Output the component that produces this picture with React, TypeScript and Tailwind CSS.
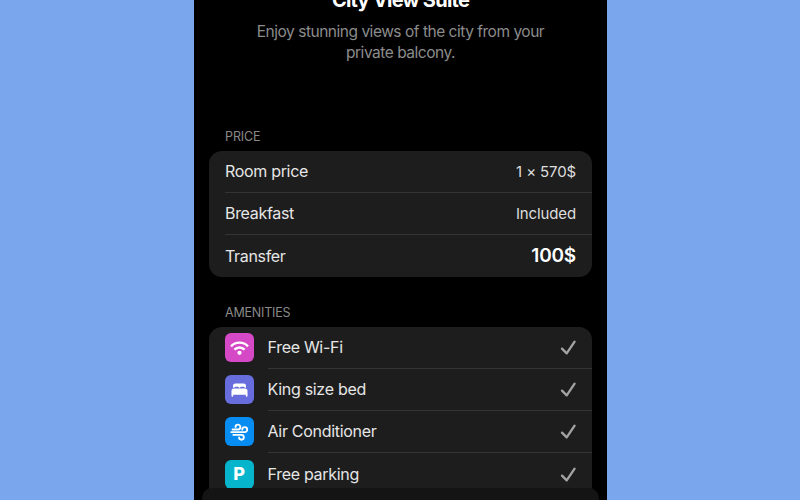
import type { ReactNode } from 'react';

const WifiIcon = () => (
  <svg width="30" height="30" viewBox="0 0 30 30" fill="none" stroke="#fff" strokeWidth="2.4">
    <path d="M6.2 13.3C11 8.2 19 8.2 23.8 13.3" />
    <path d="M9.7 16.7C12.7 13.7 17.3 13.7 20.3 16.7" />
    <circle cx="15" cy="20" r="2.2" fill="#fff" stroke="none" />
  </svg>
);

const BedIcon = () => (
  <svg width="30" height="30" viewBox="0 0 30 30" fill="#fff">
    <path d="M8.3 12.6V10.6Q8.3 8.2 10.7 8.2H19.3Q21.7 8.2 21.7 10.6V12.6H20.5Q20.2 11.6 19 11.6H16.8Q15.8 11.6 15.4 12.6H14.6Q14.2 11.6 13.2 11.6H11Q9.8 11.6 9.5 12.6Z" />
    <path d="M9.3 13.4H20.7Q23.3 13.4 23.3 16V21Q23.3 21.9 22.4 21.9Q21.5 21.9 21.5 21V19.8H8.5V21Q8.5 21.9 7.6 21.9Q6.7 21.9 6.7 21V16Q6.7 13.4 9.3 13.4Z" />
  </svg>
);

const WindIcon = () => (
  <svg width="30" height="30" viewBox="0 0 30 30" fill="none" stroke="#fff" strokeWidth="1.9" strokeLinecap="round">
    <path d="M7.8 12.4H13.4A2.5 2.5 0 1 0 10.9 9.9" />
    <path d="M6.5 15.2H20.4A2.6 2.6 0 1 0 17.8 12.6" />
    <path d="M8.6 18H17A2.5 2.5 0 1 1 14.5 20.5" />
  </svg>
);

const ParkingIcon = () => (
  <span className="text-[18px] leading-none font-extrabold text-white">P</span>
);

const CheckIcon = () => (
  <svg className="mr-[15px]" width="17" height="18" viewBox="0 0 17 18" fill="none" stroke="#a3a3a3" strokeWidth="2.3" strokeLinecap="round" strokeLinejoin="round">
    <path d="M2 10.6L6.7 15.4L14.6 3.6" />
  </svg>
);

const prices = [
  { label: 'Room price', value: '1 × 570$', style: 'pt-[1.5px] text-[15px] tracking-[-0.13px] text-[#dedede]' },
  { label: 'Breakfast', value: 'Included', style: 'pt-[1.5px] text-[15px] tracking-[-0.13px] text-[#dedede]' },
  { label: 'Transfer', value: '100$', style: 'pt-px text-[19px] font-semibold tracking-[-0.2px] text-white' },
];

const amenities: { label: string; color: string; icon: ReactNode }[] = [
  { label: 'Free Wi-Fi', color: 'bg-[#d549c6]', icon: <WifiIcon /> },
  { label: 'King size bed', color: 'bg-[#686ddd]', icon: <BedIcon /> },
  { label: 'Air Conditioner', color: 'bg-[#078cf2]', icon: <WindIcon /> },
  { label: 'Free parking', color: 'bg-[#06b4cb]', icon: <ParkingIcon /> },
];

export default function App() {
  return (
    <div className="flex h-[500px] w-[800px] justify-center overflow-hidden bg-[#79a6ed] pl-px font-['Inter',sans-serif]">
      <main className="relative h-[500px] w-[413px] overflow-hidden bg-black px-[15px] text-[#e6e6e6]">
        <h1 className="-mt-[12px] h-6 text-center text-[20px] leading-6 font-bold tracking-[-0.75px] text-white">City View Suite</h1>
        <p className="mt-[9px] text-center text-[15.5px] leading-[21px] tracking-[-0.48px] text-[#8c8c8c]">
          Enjoy stunning views of the city from your
          <br />
          private balcony.
        </p>
        <h2 className="mt-[64px] h-5 pl-4 text-[12.5px] leading-5 tracking-[-0.1px] text-[#8a8a8a]">PRICE</h2>
        <section className="mt-[3.5px] h-[126.5px] rounded-[13px] bg-[#1d1d1d] pl-4">
          {prices.map(({ label, value, style }) => (
            <div key={label} className="flex h-[42.2px] items-center justify-between border-b border-[#343434] pr-4 last:border-0">
              <span className="text-[16px] tracking-[-0.32px]">{label}</span>
              <span className={style}>{value}</span>
            </div>
          ))}
        </section>
        <h2 className="mt-[26px] h-5 pl-4 text-[12.5px] leading-5 tracking-[-0.2px] text-[#8a8a8a]">AMENITIES</h2>
        <section className="mt-[3.5px] h-[190px] rounded-t-[13px] bg-[#1d1d1d] pl-[15.5px]">
          {amenities.map(({ label, color, icon }) => (
            <div key={label} className="flex h-[42.2px] items-center">
              <span className={`flex h-[29px] w-[29px] shrink-0 items-center justify-center rounded-md ${color}`}>{icon}</span>
              <div className="ml-[14px] flex h-full flex-1 items-center justify-between border-b border-[#343434]">
                <span className="text-[16px] tracking-[-0.3px]">{label}</span>
                <CheckIcon />
              </div>
            </div>
          ))}
        </section>
        <div className="absolute bottom-0 left-[8px] h-[12px] w-[397px] rounded-t-[10px] bg-[#141414]" />
      </main>
    </div>
  );
}
